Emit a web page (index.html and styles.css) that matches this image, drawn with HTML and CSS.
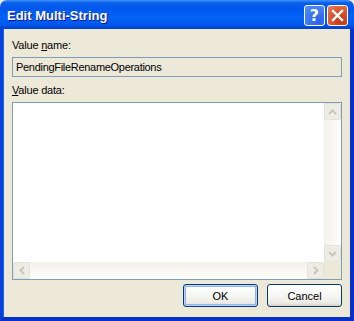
FILE: index.html
```html
<!DOCTYPE html>
<html lang="en">
<head>
    <meta charset="UTF-8">
    <title>Edit Multi-String</title>
    <link rel="stylesheet" href="styles.css">
</head>
<body>
    <div class="window">
        <div class="titlebar">
            <span class="title">Edit Multi-String</span>
            <div class="caption-buttons">
                <div class="cap-btn help">?</div>
                <div class="cap-btn close">
                    <svg width="13" height="13" viewBox="0 0 13 13">
                        <path d="M2 2 L11 11 M11 2 L2 11" stroke="#fff" stroke-width="2.4" stroke-linecap="square"/>
                    </svg>
                </div>
            </div>
        </div>
        <div class="frame">
            <div class="field">
                <label>Value <u>n</u>ame:</label>
                <div class="name-box">PendingFileRenameOperations</div>
            </div>
            <div class="field">
                <label><u>V</u>alue data:</label>
                <div class="data-box">
                    <div class="data-main">
                        <div class="data-text"></div>
                        <div class="vscroll">
                            <div class="sb-btn">
                                <svg width="9" height="6" viewBox="0 0 9 6"><path d="M1 5 L4.5 1.5 L8 5" fill="none" stroke="#c9c7ba" stroke-width="2"/></svg>
                            </div>
                            <div class="vtrack"></div>
                            <div class="sb-btn">
                                <svg width="9" height="6" viewBox="0 0 9 6"><path d="M1 1 L4.5 4.5 L8 1" fill="none" stroke="#c9c7ba" stroke-width="2"/></svg>
                            </div>
                        </div>
                    </div>
                    <div class="hscroll">
                        <div class="sb-btn">
                            <svg width="6" height="9" viewBox="0 0 6 9"><path d="M5 1 L1.5 4.5 L5 8" fill="none" stroke="#c9c7ba" stroke-width="2"/></svg>
                        </div>
                        <div class="htrack"></div>
                        <div class="sb-btn">
                            <svg width="6" height="9" viewBox="0 0 6 9"><path d="M1 1 L4.5 4.5 L1 8" fill="none" stroke="#c9c7ba" stroke-width="2"/></svg>
                        </div>
                        <div class="corner"></div>
                    </div>
                </div>
            </div>
            <div class="buttons">
                <button class="btn default">OK</button>
                <button class="btn">Cancel</button>
            </div>
        </div>
    </div>
</body>
</html>
```

FILE: styles.css
```css
body {
    margin: 0;
    font-family: "Liberation Sans", Arial, sans-serif;
    font-size: 11px;
    color: #000;
    background: #ece9d8;
}

.window {
    width: 354px;
    height: 321px;
    display: flex;
    flex-direction: column;
}

.titlebar {
    height: 29px;
    flex: none;
    display: flex;
    align-items: center;
    justify-content: space-between;
    padding: 0 6px 0 7px;
    box-sizing: border-box;
    border-radius: 7px 7px 0 0;
    background: linear-gradient(to bottom, #3d95ff 0%, #0a5de8 10%, #0058ee 30%, #0462f6 60%, #0057ec 85%, #0040c8 100%);
}

.title {
    color: #fff;
    font-weight: bold;
    font-size: 13px;
    text-shadow: 1px 1px #0f1089;
    margin-top: 1px;
}

.caption-buttons {
    display: flex;
    gap: 2px;
    margin-top: 1px;
}

.cap-btn {
    width: 21px;
    height: 21px;
    box-sizing: border-box;
    border: 1px solid #fff;
    border-radius: 3px;
    display: flex;
    align-items: center;
    justify-content: center;
    color: #fff;
}

.help {
    background: radial-gradient(circle at 70% 80%, #2a63e8 0%, #3d78f0 50%, #5b90f7 100%);
    font-family: "DejaVu Sans", sans-serif;
    font-weight: bold;
    font-size: 16px;
}

.close {
    background: radial-gradient(circle at 70% 80%, #c4361a 0%, #d9542c 50%, #e8805e 100%);
}

.frame {
    flex: 1;
    display: flex;
    flex-direction: column;
    border-left: 3px solid #0841d8;
    border-right: 4px solid #0831c8;
    border-bottom: 4px solid #0831c8;
    box-shadow: inset 1px 0 #1660f0;
    padding: 10px 8px 0 9px;
    background: #ece9d8;
}

.field {
    display: flex;
    flex-direction: column;
}

label {
    line-height: 13px;
    margin-bottom: 5px;
    letter-spacing: -0.2px;
}

.name-box {
    height: 20px;
    box-sizing: border-box;
    border: 1px solid #7f9db9;
    padding: 0 3px;
    line-height: 18px;
    margin-bottom: 7px;
    letter-spacing: -0.3px;
}

.data-box {
    height: 178px;
    box-sizing: border-box;
    border: 1px solid #7f9db9;
    background: #fff;
    display: flex;
    flex-direction: column;
}

.data-main {
    flex: 1;
    display: flex;
}

.data-text {
    flex: 1;
}

.vscroll {
    width: 17px;
    display: flex;
    flex-direction: column;
    background: linear-gradient(to right, #f3f1ec, #fefefb);
}

.vtrack {
    flex: 1;
}

.hscroll {
    height: 17px;
    display: flex;
    background: linear-gradient(to bottom, #f3f1ec, #fefefb);
}

.htrack {
    flex: 1;
}

.sb-btn {
    width: 17px;
    height: 17px;
    box-sizing: border-box;
    border: 1px solid #e4e2d6;
    border-radius: 2px;
    background: #eeede5;
    display: flex;
    align-items: center;
    justify-content: center;
}

.corner {
    width: 17px;
    background: #ece9d8;
}

.buttons {
    display: flex;
    justify-content: flex-end;
    gap: 9px;
    margin-top: 4px;
}

.btn {
    width: 75px;
    height: 23px;
    font-family: "Liberation Sans", Arial, sans-serif;
    font-size: 11px;
    color: #000;
    border: 1px solid #003c74;
    border-radius: 3px;
    background: linear-gradient(to bottom, #fff 0%, #f6f6f3 50%, #ecebe6 85%, #d6d0c5 100%);
    padding: 0;
}

.btn.default {
    box-shadow: inset 0 0 0 1px #b9d2f6, inset 0 0 0 2px #91b2ea;
}
```
